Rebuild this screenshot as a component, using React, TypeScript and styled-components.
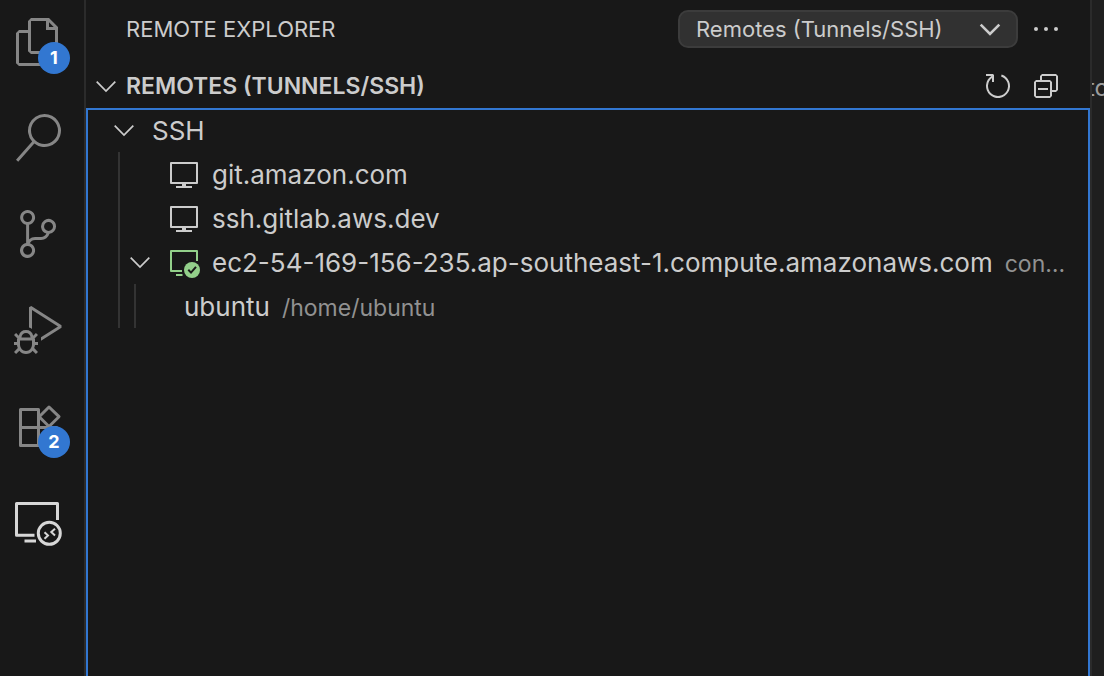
import React from "react";
import styled, { createGlobalStyle } from "styled-components";

const color = {
  side: "#181818",
  editor: "#1f1f1f",
  line: "#2b2b2b",
  guide: "#333333",
  text: "#cccccc",
  muted: "#919191",
  idle: "#868686",
  active: "#d7d7d7",
  blue: "#3277d1",
  green: "#93d08a",
};

const GlobalStyle = createGlobalStyle`
  * { box-sizing: border-box; }
  body {
    margin: 0;
    background: ${color.side};
    color: ${color.text};
    font-family: Inter, "Liberation Sans", sans-serif;
    font-size: 26px;
  }
  button, select { font: inherit; color: inherit; }
  button { padding: 0; border: 0; background: none; cursor: pointer; }
  svg { display: block; flex: none; }
  ul { list-style: none; margin: 0; padding: 0; }
`;

const Window = styled.div`
  display: flex;
  height: 100vh;
  overflow: hidden;
`;

const ActivityBar = styled.nav`
  flex: none;
  width: 86px;
  padding: 18px 0 0 14px;
  border-right: 2px solid ${color.line};
  display: flex;
  flex-direction: column;
  align-items: flex-start;
  gap: 48px;
`;

const ActivityButton = styled.button<{ $active?: boolean }>`
  position: relative;
  width: 48px;
  height: 48px;
  color: ${(p) => (p.$active ? color.active : color.idle)};
`;

const Badge = styled.span`
  position: absolute;
  left: 24px;
  top: 24px;
  width: 32px;
  height: 32px;
  border-radius: 50%;
  background: ${color.blue};
  color: #ffffff;
  font-size: 18px;
  font-weight: 700;
  line-height: 32px;
  text-align: center;
`;

const SideBar = styled.main`
  flex: 1;
  min-width: 0;
  display: flex;
  flex-direction: column;
  border-right: 2px solid ${color.line};
`;

const TitleBar = styled.header`
  display: flex;
  align-items: center;
  gap: 12px;
  height: 64px;
  padding: 0 28px 6px 40px;
`;

const Title = styled.h1`
  flex: 1;
  margin: 0;
  font-size: 22px;
  font-weight: 400;
  line-height: 32px;
`;

const SelectBox = styled.div`
  position: relative;
  width: 340px;
  svg {
    position: absolute;
    right: 12px;
    top: 3px;
    pointer-events: none;
  }
`;

const Select = styled.select`
  display: block;
  appearance: none;
  width: 100%;
  height: 38px;
  padding: 0 48px 0 16px;
  border: 2px solid #3c3c3c;
  border-radius: 10px;
  background: #313131;
  font-size: 22px;
`;

const IconButton = styled.button`
  width: 32px;
  height: 32px;
`;

const SectionBar = styled.div`
  display: flex;
  align-items: center;
  gap: 16px;
  height: 44px;
  padding: 0 28px 0 4px;
`;

const SectionToggle = styled.button`
  flex: 1;
  display: flex;
  align-items: center;
  gap: 4px;
  font-size: 23px;
  font-weight: 600;
  line-height: 44px;
  text-align: left;
`;

/* The focus ring's bottom edge runs below the window. */
const Tree = styled.ul`
  flex: 1;
  margin-bottom: -2px;
  outline: 2px solid ${color.blue};
  outline-offset: -2px;
`;

const Group = styled.ul<{ $indent: number }>`
  margin-left: ${(p) => p.$indent}px;
  border-left: 2px solid ${color.guide};
`;

const Row = styled.div<{ $indent: number }>`
  display: flex;
  align-items: center;
  gap: 12px;
  height: 44px;
  padding: 0 24px 0 ${(p) => p.$indent}px;
`;

const RowText = styled.div`
  flex: 1;
  min-width: 0;
  display: flex;
  align-items: baseline;
  gap: 12px;
  padding-top: 2px;
  line-height: 42px;
  white-space: nowrap;
`;

const Label = styled.span`
  flex: none;
`;

const Description = styled.span`
  min-width: 0;
  overflow: hidden;
  text-overflow: ellipsis;
  color: ${color.muted};
  font-size: 23px;
`;

const Editor = styled.section`
  flex: none;
  width: 12px;
  padding-top: 66px;
  overflow: hidden;
  background: ${color.editor};
  color: #9d9d9d;
`;

const EditorText = styled.p`
  margin: 0 0 0 -5px;
  font-size: 24px;
  line-height: 44px;
  white-space: nowrap;
`;

const Chevron = ({ weight = 1.7 }: { weight?: number }) => (
  <svg width="32" height="32" fill="none" stroke="currentColor" strokeWidth={weight} aria-hidden>
    <path d="M6.7 11.6 16 21l9.3-9.4" />
  </svg>
);

const Glyph = ({ d, size, grid }: { d: string; size: number; grid: number }) => (
  <svg width={size} height={size} viewBox={`0 0 ${grid} ${grid}`} fill="currentColor" fillRule="evenodd" aria-hidden>
    <path d={d} />
  </svg>
);

const filesPath =
  "M17.5 0h-9L7 1.5V6H2.5L1 7.5v15.07L2.5 24h12.07L16 22.57V18h4.7l1.3-1.43V4.5L17.5 0zm0 2.12l2.38 2.38H17.5V2.12zm-3 20.38h-12v-15H7v9.07L8.5 18h6v4.5zm6-6h-12v-15H16V6h4.5v10.5z";
const searchPath =
  "M15.25 0a8.25 8.25 0 0 0-6.18 13.72L1 22.88l1.12 1 8.05-9.12A8.251 8.251 0 1 0 15.25.01V0zm0 15a6.75 6.75 0 1 1 0-13.5 6.75 6.75 0 0 1 0 13.5z";
const branchPath =
  "M21.007 8.222A3.738 3.738 0 0 0 15.045 5.2a3.737 3.737 0 0 0 1.156 6.583 2.988 2.988 0 0 1-2.668 1.67h-2.99a4.456 4.456 0 0 0-2.989 1.165V7.4a3.737 3.737 0 1 0-1.494 0v9.117a3.776 3.776 0 1 0 1.816.099 2.99 2.99 0 0 1 2.668-1.667h2.99a4.484 4.484 0 0 0 4.223-3.039 3.736 3.736 0 0 0 3.25-3.687zM4.565 3.738a2.242 2.242 0 1 1 4.484 0 2.242 2.242 0 0 1-4.484 0zm4.484 16.441a2.242 2.242 0 1 1-4.484 0 2.242 2.242 0 0 1 4.484 0zm8.221-9.715a2.242 2.242 0 1 1 0-4.485 2.242 2.242 0 0 1 0 4.485z";
const debugPath =
  "M10.94 13.5l-1.32 1.32a3.73 3.73 0 0 0-7.24 0L1.06 13.5 0 14.56l1.72 1.72-.22.22V18H0v1.5h1.5v.08c.077.489.214.966.41 1.42L0 22.94 1.06 24l1.65-1.65A4.308 4.308 0 0 0 6 24a4.31 4.31 0 0 0 3.29-1.65L10.94 24 12 22.94 10.09 21c.198-.464.336-.951.41-1.45v-.1H12V18h-1.5v-1.5l-.22-.22L12 14.56l-1.06-1.06zM6 13.5a2.25 2.25 0 0 1 2.25 2.25h-4.5A2.25 2.25 0 0 1 6 13.5zm3 6a3.33 3.33 0 0 1-3 3 3.33 3.33 0 0 1-3-3v-2.25h6v2.25zm14.76-9.9v1.26L13.5 17.37V15.6l8.5-5.37L9 2v9.46a5.07 5.07 0 0 0-1.5-.72V.63L8.64 0l15.12 9.6z";
const refreshPath =
  "M4.681 3H2V2h3.5l.5.5V6H5V4a5 5 0 1 0 4.53-.761l.302-.954A6 6 0 1 1 4.681 3z";
const collapsePath =
  "M9 9H4v1h5V9zM5 3l1-1h7l1 1v7l-1 1h-2v2l-1 1H3l-1-1V6l1-1h2V3zm1 2h4l1 1v4h2V3H6v2zm4 1H3v7h7V6z";

const ExtensionsIcon = () => (
  <svg width="48" height="48" fill="none" stroke="currentColor" strokeWidth="3" strokeLinejoin="round" aria-hidden>
    <path d="M24.5 25.5v-18h-18v36h36v-18h-36M24.5 25.5v18" />
    <path d="M35 5 45 14.7 35 24.5 25.2 14.7Z" fill={color.side} />
  </svg>
);

const RemoteIcon = () => (
  <svg width="48" height="48" fill="none" stroke="currentColor" strokeWidth="3" aria-hidden>
    <path d="M20.5 37.2H2.5V5.5h41V22M10.5 43H22" strokeLinejoin="round" />
    <circle cx="35.3" cy="35.3" r="11" />
    <path d="m30.5 34.2 3.5 3.3-3.5 3.3M41 30.8l-3.7 3.3 3.7 3.4" strokeWidth="2" />
  </svg>
);

const MonitorIcon = () => (
  <svg width="32" height="32" fill="none" stroke="currentColor" strokeWidth="2" aria-hidden>
    <path d="M3 5h26v20H3zM8 29h16M16 25v4" strokeLinejoin="round" />
    <path d="M14 27h4" />
  </svg>
);

const ConnectedIcon = () => (
  <svg width="32" height="32" fill="none" stroke={color.green} strokeWidth="2" aria-hidden>
    <path d="M14 25H3V5h26v10M8 29h6.5" strokeLinejoin="round" />
    <circle cx="24" cy="24" r="8" fill={color.green} stroke="none" />
    <path d="m20.3 23.8 2.7 2.8 5-5.8" stroke={color.side} />
  </svg>
);

const MoreIcon = () => (
  <svg width="32" height="32" fill="currentColor" aria-hidden>
    <circle cx="6" cy="16" r="2" />
    <circle cx="16" cy="16" r="2" />
    <circle cx="26" cy="16" r="2" />
  </svg>
);

const activities = [
  { name: "Explorer", icon: <Glyph d={filesPath} size={48} grid={24} />, badge: 1 },
  { name: "Search", icon: <Glyph d={searchPath} size={48} grid={24} /> },
  { name: "Source Control", icon: <Glyph d={branchPath} size={48} grid={24} /> },
  { name: "Run and Debug", icon: <Glyph d={debugPath} size={48} grid={24} /> },
  { name: "Extensions", icon: <ExtensionsIcon />, badge: 2 },
  { name: "Remote Explorer", icon: <RemoteIcon />, active: true },
];

const hosts = ["git.amazon.com", "ssh.gitlab.aws.dev"];

const ItemText = ({ label, description }: { label: string; description?: string }) => (
  <RowText>
    <Label>{label}</Label>
    {description && <Description>{description}</Description>}
  </RowText>
);

export default function App() {
  return (
    <>
      <GlobalStyle />
      <Window>
        <ActivityBar aria-label="Views">
          {activities.map((a) => (
            <ActivityButton key={a.name} type="button" aria-label={a.name} $active={a.active}>
              {a.icon}
              {a.badge && <Badge>{a.badge}</Badge>}
            </ActivityButton>
          ))}
        </ActivityBar>
        <SideBar>
          <TitleBar>
            <Title>REMOTE EXPLORER</Title>
            <SelectBox>
              <Select aria-label="Remote type">
                <option>Remotes (Tunnels/SSH)</option>
              </Select>
              <Chevron weight={2.6} />
            </SelectBox>
            <IconButton type="button" aria-label="More actions">
              <MoreIcon />
            </IconButton>
          </TitleBar>
          <SectionBar>
            <SectionToggle type="button" aria-expanded="true">
              <Chevron />
              REMOTES (TUNNELS/SSH)
            </SectionToggle>
            <IconButton type="button" aria-label="Refresh">
              <Glyph d={refreshPath} size={32} grid={16} />
            </IconButton>
            <IconButton type="button" aria-label="Collapse all">
              <Glyph d={collapsePath} size={32} grid={16} />
            </IconButton>
          </SectionBar>
          <Tree role="tree" aria-label="Remotes">
            <li role="treeitem" aria-expanded="true">
              <Row $indent={22}>
                <Chevron />
                <ItemText label="SSH" />
              </Row>
              <Group role="group" $indent={32}>
                {hosts.map((host) => (
                  <li key={host} role="treeitem">
                    <Row $indent={48}>
                      <MonitorIcon />
                      <ItemText label={host} />
                    </Row>
                  </li>
                ))}
                <li role="treeitem" aria-expanded="true">
                  <Row $indent={4}>
                    <Chevron />
                    <ConnectedIcon />
                    <ItemText
                      label="ec2-54-169-156-235.ap-southeast-1.compute.amazonaws.com"
                      description="connected"
                    />
                  </Row>
                  <Group role="group" $indent={14}>
                    <li role="treeitem">
                      <Row $indent={48}>
                        <ItemText label="ubuntu" description="/home/ubuntu" />
                      </Row>
                    </li>
                  </Group>
                </li>
              </Group>
            </li>
          </Tree>
        </SideBar>
        <Editor>
          <EditorText>to</EditorText>
        </Editor>
      </Window>
    </>
  );
}
